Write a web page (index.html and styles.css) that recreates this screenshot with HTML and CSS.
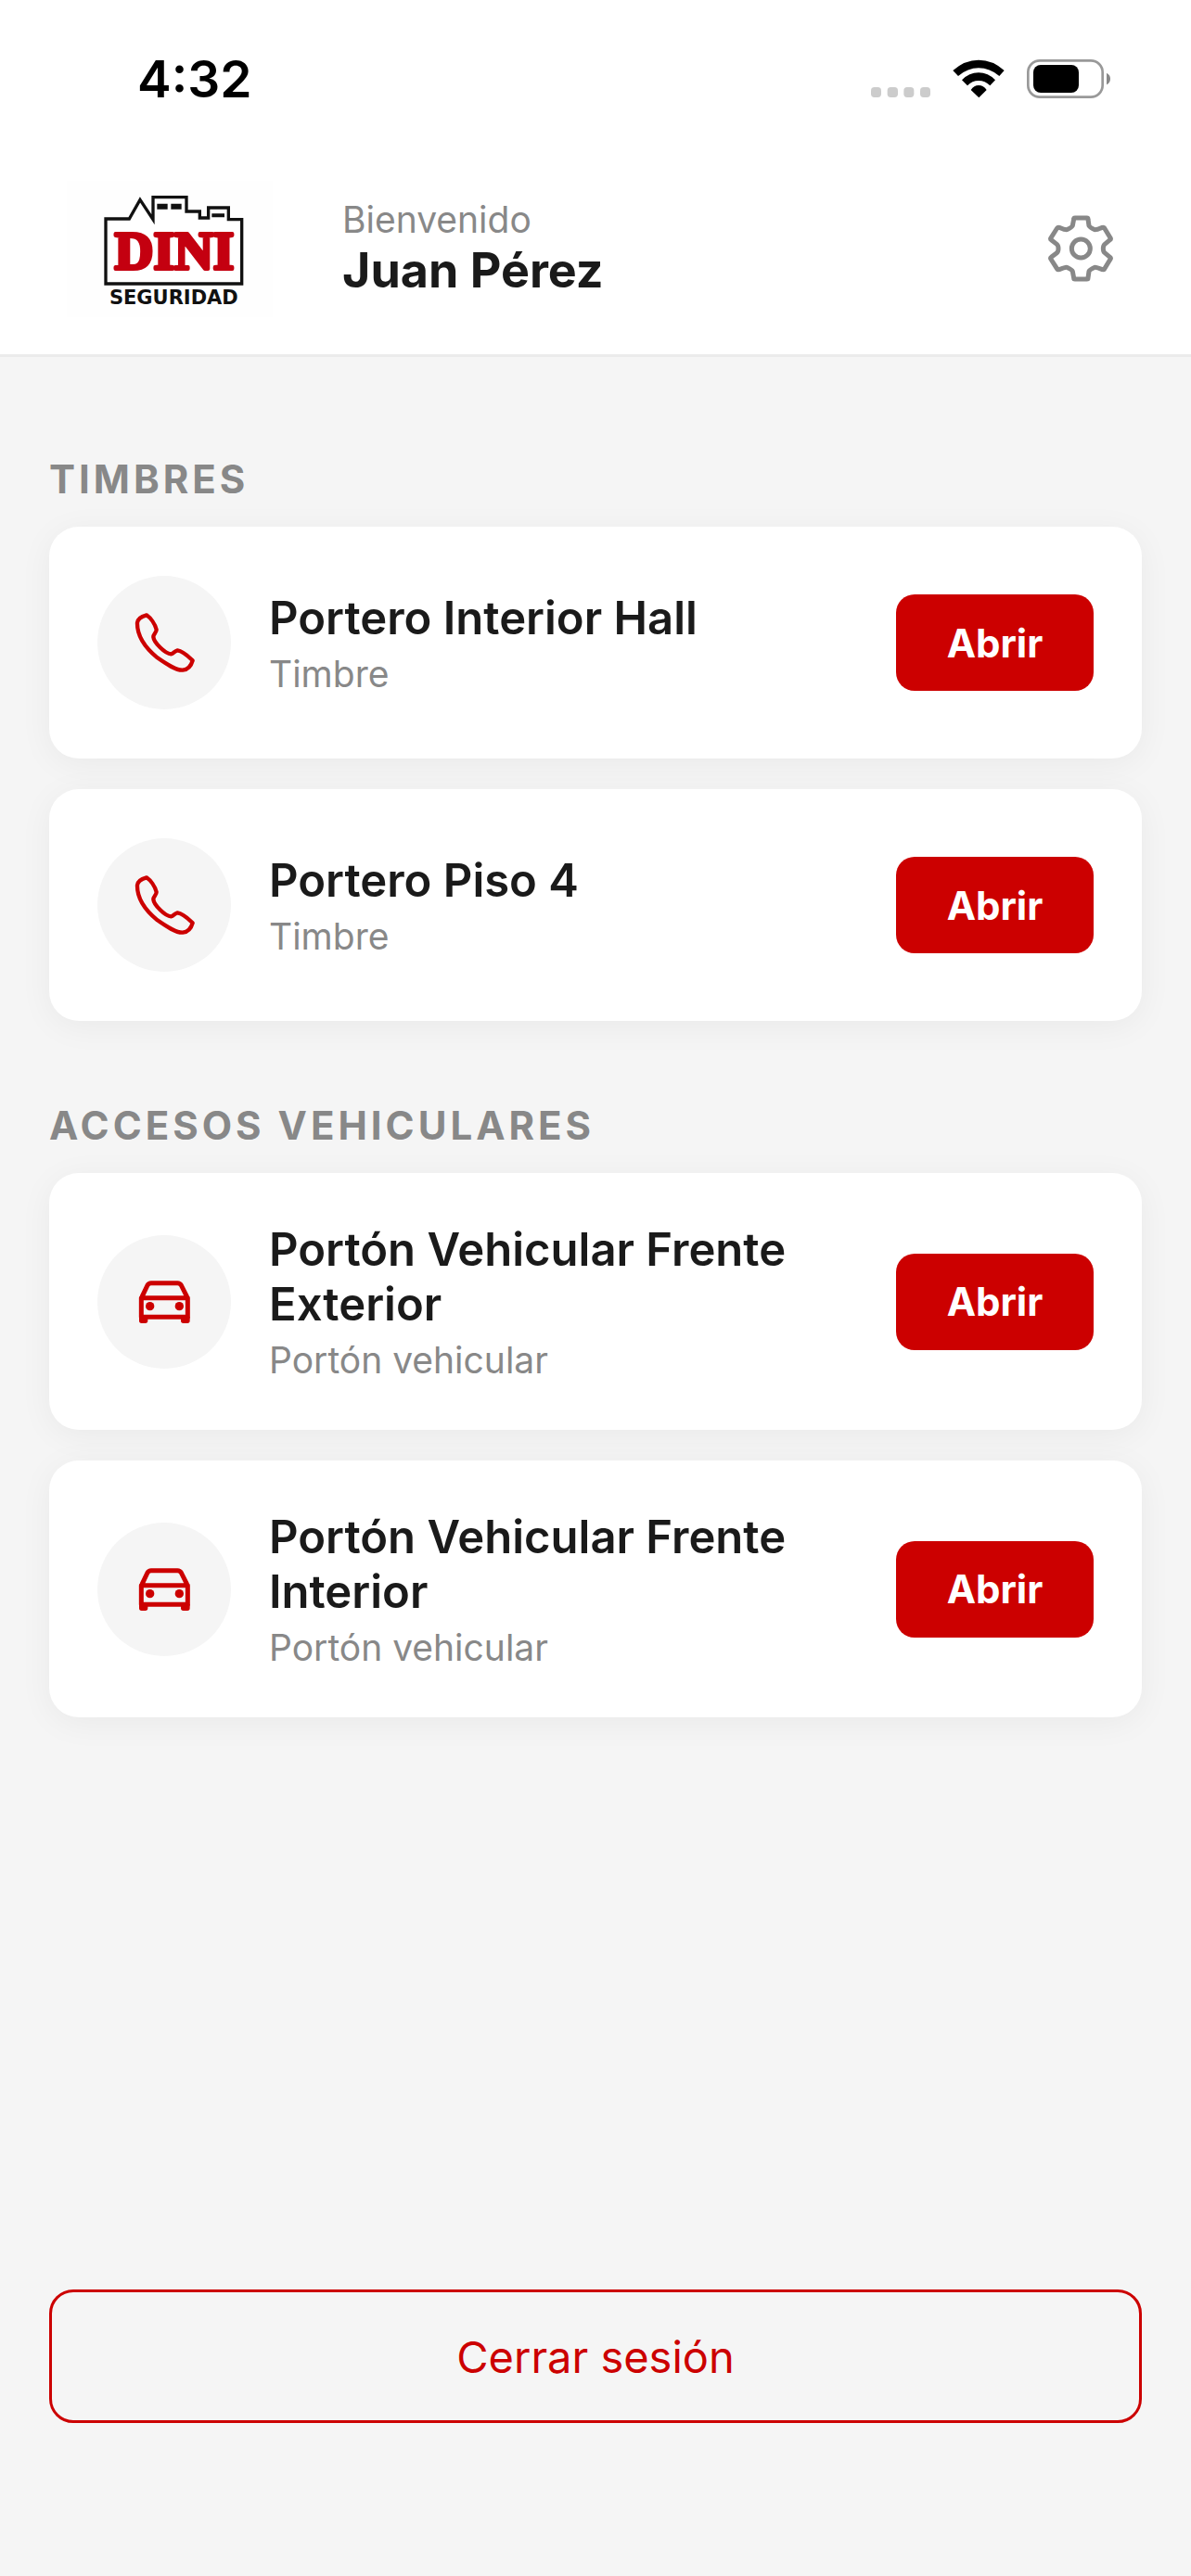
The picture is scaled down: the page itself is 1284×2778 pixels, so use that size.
FILE: index.html
```html
<!DOCTYPE html>
<html lang="es">
<head>
<meta charset="utf-8">
<meta name="viewport" content="width=device-width, initial-scale=1">
<title>DINI Seguridad</title>
<link rel="stylesheet" href="styles.css">
</head>
<body>
<svg class="sprite" aria-hidden="true">
  <symbol id="phone" viewBox="163 181 198 198">
    <path d="M205 191C190 195 176 202 175 216C174 260 205 300 240 329C270 350 300 370 322 369C340 367 350 352 354 338C340 325 325 308 305 305C295 307 293 316 284 317C265 316 229 280 227 262C227 252 237 248 237 238C232 220 218 200 205 191Z" fill="none" stroke="currentColor" stroke-width="13" stroke-linejoin="round"/>
  </symbol>
  <symbol id="car" viewBox="163 183 198 198">
    <path d="M188 269H338V331H188ZM190 266L208 228Q212 221 220 221H305Q313 221 317 228L336 266" fill="none" stroke="currentColor" stroke-width="15" stroke-linejoin="round"/>
    <path d="M181 330H209V343Q209 351 201 351H189Q181 351 181 343ZM316 330H345V343Q345 351 337 351H324Q316 351 316 343Z" fill="currentColor"/>
    <circle cx="216" cy="296" r="14" fill="currentColor"/>
    <circle cx="311" cy="296" r="14" fill="currentColor"/>
  </symbol>
</svg>
<div class="app">
  <div class="status">
    <span class="time">4:32</span>
    <svg class="indicators" viewBox="117 66 774 138" aria-hidden="true">
      <g fill="#ccc">
        <rect x="117" y="162" width="33" height="33" rx="11"/>
        <rect x="170" y="162" width="34" height="33" rx="11"/>
        <rect x="223" y="162" width="33" height="33" rx="11"/>
        <rect x="276" y="162" width="33" height="33" rx="11"/>
      </g>
      <path d="M382 108Q420 74 465 74Q511 74 548 108L532 126Q501 100 465 100Q430 100 399 126ZM411 139Q434 115 465 115Q496 115 519 139L502 157Q486 141 465 141Q444 141 429 157ZM440 171Q450 156 465 156Q481 156 491 171L466 196Z"/>
      <rect x="625" y="76" width="241" height="118" rx="38" fill="none" stroke="#999" stroke-width="8"/>
      <rect x="642" y="90" width="147" height="90" rx="24"/>
      <path d="M879 116Q891 122 891 135Q891 148 879 154Z" fill="#888"/>
    </svg>
  </div>
  <header class="header">
    <svg class="logo" viewBox="-54 42 666 441" role="img" aria-label="DINI Seguridad">
      <rect x="-54" y="42" width="666" height="441" fill="#fefefe"/>
      <path d="M72 165H148L183 103L225 167V95H333V141H376V162H404V129H469V167H512V375H72Z" fill="#fff" stroke="#111" stroke-width="10"/>
      <path d="M238 116H272V134H238ZM283 116H317V134H283ZM415 148H456V160H415Z" fill="#111"/>
      <text class="logo-name" x="294" y="328" text-anchor="middle">DINI</text>
      <text class="logo-sub" x="292" y="440" text-anchor="middle">SEGURIDAD</text>
    </svg>
    <div class="greeting">
      <span class="welcome">Bienvenido</span>
      <span class="user">Juan Pérez</span>
    </div>
    <button class="settings" type="button" aria-label="Ajustes">
      <svg viewBox="88 69 216 216" fill="none" stroke="#888" stroke-width="15" stroke-linejoin="round">
        <path d="M178 78H216Q220 78 220 82L223 103Q225 108 242 116Q246 117 266 109Q271 108 273 111L293 144Q294 147 291 149L274 163Q269 167 269 177Q269 187 274 191L291 205Q294 207 293 210L273 243Q271 246 266 245Q246 237 242 238Q225 246 223 251L220 272Q220 276 216 276H178Q174 276 174 272L170 251Q168 246 151 238Q147 237 127 245Q122 246 120 243L99 210Q98 207 101 205L119 191Q124 187 124 177Q124 167 119 163L101 149Q98 147 99 144L120 111Q122 108 127 109Q147 117 151 116Q168 108 170 103L174 82Q174 78 178 78Z"/>
        <circle cx="197" cy="177" r="30"/>
      </svg>
    </button>
  </header>
  <main class="content">
    <section class="group">
      <h2 class="group-title">TIMBRES</h2>
      <article class="card">
        <span class="badge"><svg><use href="#phone"/></svg></span>
        <div class="info"><h3 class="name">Portero Interior Hall</h3><p class="kind">Timbre</p></div>
        <button class="open" type="button">Abrir</button>
      </article>
      <article class="card">
        <span class="badge"><svg><use href="#phone"/></svg></span>
        <div class="info"><h3 class="name">Portero Piso 4</h3><p class="kind">Timbre</p></div>
        <button class="open" type="button">Abrir</button>
      </article>
    </section>
    <section class="group">
      <h2 class="group-title">ACCESOS VEHICULARES</h2>
      <article class="card">
        <span class="badge"><svg><use href="#car"/></svg></span>
        <div class="info"><h3 class="name">Portón Vehicular Frente Exterior</h3><p class="kind">Portón vehicular</p></div>
        <button class="open" type="button">Abrir</button>
      </article>
      <article class="card">
        <span class="badge"><svg><use href="#car"/></svg></span>
        <div class="info"><h3 class="name">Portón Vehicular Frente Interior</h3><p class="kind">Portón vehicular</p></div>
        <button class="open" type="button">Abrir</button>
      </article>
    </section>
  </main>
  <footer class="footer">
    <button class="logout" type="button">Cerrar sesión</button>
  </footer>
</div>
</body>
</html>
```
FILE: styles.css
```css
* { box-sizing: border-box; margin: 0; padding: 0; }

body {
  background: #f5f5f5;
  color: #1a1a1a;
  font-family: Inter, "Liberation Sans", sans-serif;
}

button { font: inherit; cursor: pointer; border: 0; background: none; }

.sprite { display: none; }

.app { display: flex; flex-direction: column; min-height: 100vh; }

.status {
  display: flex;
  align-items: center;
  justify-content: space-between;
  height: 170px;
  padding: 0 87px 0 148px;
  background: #fff;
}
.time { font-size: 55px; font-weight: 600; color: #000; }
.indicators { width: 258px; height: 46px; }

.header {
  display: flex;
  align-items: center;
  height: 215px;
  padding: 0 83px 16px 72px;
  background: #fff;
  border-bottom: 3px solid #ebebeb;
}
.logo { width: 222px; height: 147px; }
.logo-name {
  font: bold 174px "Liberation Serif", serif;
  fill: #c40010;
  stroke: #c40010;
  stroke-width: 12px;
  stroke-linejoin: round;
}
.logo-sub { font: bold 63px "DejaVu Sans", sans-serif; fill: #111; }
.greeting { display: flex; flex: 1; flex-direction: column; padding-left: 75px; }
.welcome { font-size: 39px; line-height: 48px; color: #888; }
.user { font-size: 52px; font-weight: 700; line-height: 62px; }
.settings { width: 72px; height: 72px; }
.settings svg { display: block; width: 72px; height: 72px; }

.content { flex: 1; padding: 107px 53px 53px; }
.group { display: flex; flex-direction: column; gap: 33px; }
.group + .group { margin-top: 88px; }
.group-title {
  margin-bottom: -7px;
  font-size: 42px;
  font-weight: 700;
  line-height: 50px;
  letter-spacing: 4px;
  color: #888;
}

.card {
  display: flex;
  align-items: center;
  gap: 41px;
  padding: 53px 52px;
  background: #fff;
  border-radius: 32px;
  box-shadow: 0 6px 36px rgba(0, 0, 0, 0.05);
}
.badge {
  display: flex;
  flex: none;
  align-items: center;
  justify-content: center;
  width: 144px;
  height: 144px;
  border-radius: 50%;
  background: #f5f5f5;
  color: #c00;
}
.badge svg { width: 66px; height: 66px; }
.info { flex: 1; min-width: 0; }
.name { font-size: 49px; font-weight: 600; line-height: 59px; }
.kind { margin-top: 9px; font-size: 39px; line-height: 44px; color: #888; }
.open {
  flex: none;
  width: 213px;
  height: 104px;
  border-radius: 20px;
  background: #c00;
  color: #fff;
  font-size: 42px;
  font-weight: 700;
}

.footer { padding: 0 53px 165px; }
.logout {
  width: 100%;
  height: 144px;
  border: 3px solid #c00;
  border-radius: 26px;
  color: #c00;
  font-size: 47px;
}
```
